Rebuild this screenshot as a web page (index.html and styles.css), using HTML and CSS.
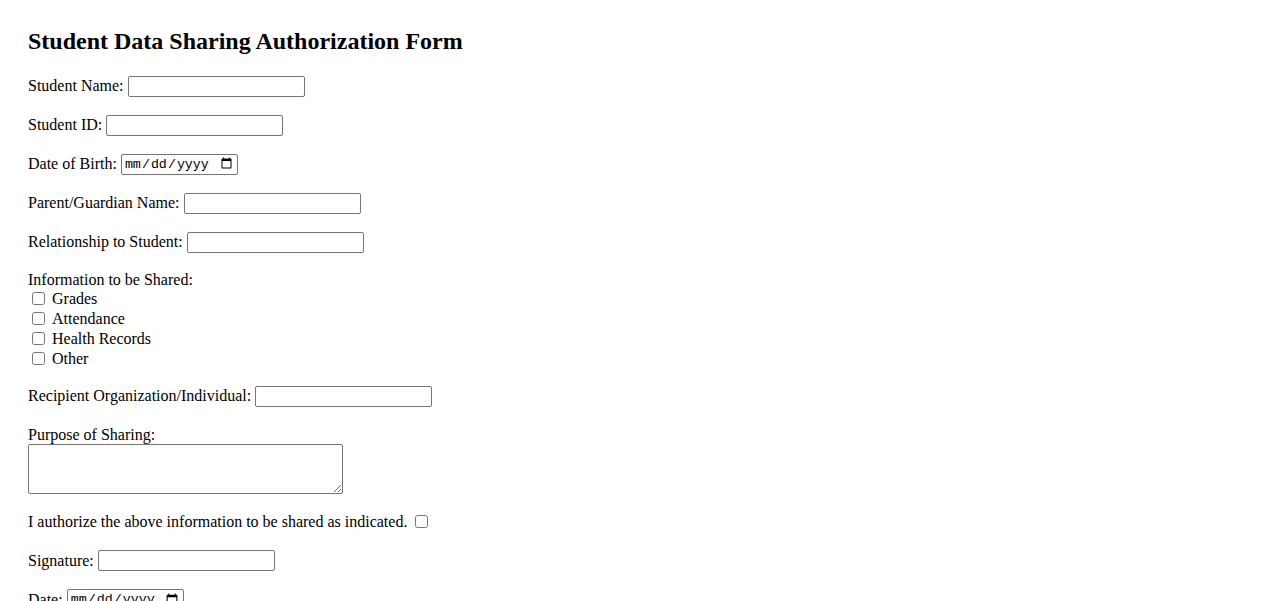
FILE: index.html
```html
<!DOCTYPE html>
<html lang="en">
<head>
<meta charset="utf-8">
<title>Student Data Sharing Authorization Form</title>
<link rel="stylesheet" href="styles.css">
</head>
<body>
<form class="form">
  <h2 class="title">Student Data Sharing Authorization Form</h2>

  <div class="row"><label for="sname">Student Name:</label><input class="text" id="sname" type="text"></div>
  <div class="row"><label for="sid">Student ID:</label><input class="text" id="sid" type="text"></div>
  <div class="row"><label for="dob">Date of Birth:</label><input class="date" id="dob" type="date"></div>
  <div class="row"><label for="pname">Parent/Guardian Name:</label><input class="text" id="pname" type="text"></div>
  <div class="row"><label for="rel">Relationship to Student:</label><input class="text" id="rel" type="text"></div>

  <div class="group">
    <div class="line">Information to be Shared:</div>
    <label class="check"><input class="box" type="checkbox"><span>Grades</span></label>
    <label class="check"><input class="box" type="checkbox"><span>Attendance</span></label>
    <label class="check"><input class="box" type="checkbox"><span>Health Records</span></label>
    <label class="check"><input class="box" type="checkbox"><span>Other</span></label>
  </div>

  <div class="row recipient"><label for="rec">Recipient Organization/Individual:</label><input class="text" id="rec" type="text"></div>

  <div class="group purpose">
    <label class="line" for="purp">Purpose of Sharing:</label>
    <textarea class="area" id="purp"></textarea>
  </div>

  <div class="row"><label for="auth">I authorize the above information to be shared as indicated.</label><input class="box" id="auth" type="checkbox"></div>
  <div class="row"><label for="sig">Signature:</label><input class="text" id="sig" type="text"></div>
  <div class="row"><label for="dt">Date:</label><input class="date" id="dt" type="date"></div>
</form>
</body>
</html>
```
FILE: styles.css
```css
html, body {
  margin: 0;
  padding: 0;
  background: #ffffff;
}

body {
  font-family: "Liberation Serif", "Times New Roman", serif;
  font-size: 16px;
  color: #000000;
  padding: 28px 28px;
}

.form {
  margin: 0;
}

.title {
  font-size: 24px;
  font-weight: bold;
  line-height: 27.6px;
  margin: 0 0 19px 0;
}

.row {
  display: flex;
  align-items: center;
  gap: 4px;
  height: 23px;
  margin: 0 0 16px 0;
  white-space: nowrap;
}

.recipient {
  margin-bottom: 17px;
}

.line {
  display: block;
  height: 19px;
  line-height: 19px;
}

.group {
  margin: 0 0 16px 0;
}

.check {
  display: flex;
  align-items: center;
  height: 20px;
}

.check span {
  margin-left: 4px;
}

.box {
  width: 13px;
  height: 13px;
  margin: 3px 3px 3px 4px;
}

.text {
  box-sizing: border-box;
  width: 177px;
  height: 21px;
  padding: 1px 2px;
  border: 1px solid #767676;
  border-radius: 2px;
  font-family: "Liberation Sans", Arial, sans-serif;
  font-size: 13.33px;
  margin: 0;
}

.date {
  box-sizing: border-box;
  width: 117px;
  height: 21px;
  padding: 1px 2px;
  border: 1px solid #767676;
  border-radius: 2px;
  font-family: "Liberation Mono", "Courier New", monospace;
  font-size: 13.33px;
  margin: 0;
}

.purpose {
  margin-bottom: 16.5px;
}

.area {
  display: block;
  box-sizing: border-box;
  width: 315px;
  height: 50px;
  margin: 0;
  padding: 2px;
  border: 1px solid #767676;
  border-radius: 2px;
  font-family: "Liberation Mono", monospace;
  font-size: 13.33px;
  resize: both;
}
```
